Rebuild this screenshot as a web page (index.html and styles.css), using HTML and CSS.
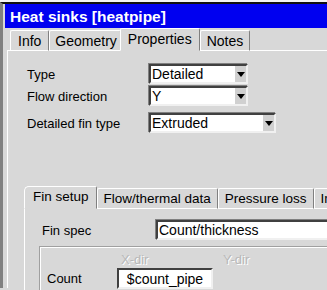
FILE: index.html
```html
<!DOCTYPE html>
<html lang="en">
<head>
  <meta charset="UTF-8">
  <title>Heat sinks [heatpipe]</title>
  <link rel="stylesheet" href="styles.css">
</head>
<body>
  <div class="window">
    <div class="titlebar">Heat sinks [heatpipe]</div>
    <div class="client">
      <div class="tabs">
        <div class="tab first">Info</div>
        <div class="tab narrow">Geometry</div>
        <div class="tab active">Properties</div>
        <div class="tab">Notes</div>
      </div>
      <div class="panel">
        <div class="row">
          <span class="label">Type</span>
          <div class="combo w100"><span>Detailed</span><i class="arrow"></i></div>
        </div>
        <div class="row">
          <span class="label">Flow direction</span>
          <div class="combo w100"><span>Y</span><i class="arrow"></i></div>
        </div>
        <div class="row gap">
          <span class="label">Detailed fin type</span>
          <div class="combo w128"><span>Extruded</span><i class="arrow"></i></div>
        </div>

        <div class="subtabs">
          <div class="tab active sub">Fin setup</div>
          <div class="tab sub">Flow/thermal data</div>
          <div class="tab sub">Pressure loss</div>
          <div class="tab sub">In</div>
        </div>
        <div class="subpanel">
          <div class="row spec">
            <span class="label">Fin spec</span>
            <div class="combo wide"><span>Count/thickness</span><i class="arrow"></i></div>
          </div>
          <div class="group">
            <div class="heads">
              <span class="xdir">X-dir</span>
              <span class="ydir">Y-dir</span>
            </div>
            <div class="row">
              <span class="label count">Count</span>
              <div class="field">$count_pipe</div>
            </div>
          </div>
        </div>
      </div>
    </div>
  </div>
</body>
</html>
```

FILE: styles.css
```css
html, body {
  margin: 0;
  width: 327px;
  height: 290px;
  overflow: hidden;
  background: #d8d8d8;
  font-family: Arial, "Liberation Sans", sans-serif;
  font-size: 13px;
  color: #000;
}
.window {
  height: 288px;
  overflow: hidden;
  border-top: 2px solid #f4f4f4;
}
.titlebar {
  border-top: 2px solid #101010;
  border-left: 3px solid #808080;
  background: #0000f0;
  color: #fff;
  font-weight: bold;
  font-size: 15.5px;
  height: 24px;
  line-height: 25px;
  padding-left: 7px;
  box-shadow: inset 2px 0 0 #d8d8d8;
  white-space: nowrap;
}
.client {
  border-left: 3px solid #808080;
  padding-left: 4px;
  height: 260px;
}
.tabs {
  display: flex;
  align-items: flex-end;
  height: 22px;
  padding-left: 3px;
  border-bottom: 1px solid #fff;
  font-size: 14px;
  white-space: nowrap;
}
.tab {
  height: 19px;
  line-height: 20px;
  padding: 0 6px;
  border-top: 1px solid #fff;
  border-left: 1px solid #fff;
  border-right: 1px solid #808080;
  border-top-left-radius: 2px;
  border-top-right-radius: 2px;
  margin-bottom: -1px;
  border-bottom: 1px solid #fff;
}
.tab.first {
  padding: 0 7px;
}
.tab.narrow {
  padding: 0 3px 0 5px;
}
.tab.active {
  height: 21px;
  padding: 0 7px 0 7px;
  border-bottom-color: #d8d8d8;
  margin-left: -1px;
}
.panel {
  border-left: 1px solid #fff;
  padding: 12px 0 0 19px;
  height: 225px;
}
.row {
  display: flex;
  align-items: center;
  height: 22px;
  white-space: nowrap;
}
.row.gap {
  margin-top: 5px;
}
.label {
  width: 122px;
  flex: none;
}
.combo {
  display: flex;
  align-items: center;
  flex: none;
  height: 16px;
  background: #fff;
  border: 2px solid;
  border-color: #404040 #f0f0f0 #f0f0f0 #404040;
  box-shadow: -1px -1px 0 #808080;
}
.combo span {
  flex: 1;
  padding-left: 1px;
  font-size: 14px;
}
.w100 { width: 95px; }
.w128 { width: 123px; }
.arrow {
  width: 11px;
  height: 16px;
  background: #d0d0d0;
  position: relative;
}
.arrow::after {
  content: "";
  position: absolute;
  left: 2px;
  top: 6px;
  border-left: 4px solid transparent;
  border-right: 4px solid transparent;
  border-top: 5px solid #000;
}
.subtabs {
  display: flex;
  align-items: flex-end;
  height: 22px;
  margin: 52px 0 0 -3px;
  border-bottom: 1px solid #fff;
  white-space: nowrap;
  font-size: 13.5px;
}
.tab.sub {
  padding: 0 6px 0 6px;
}
.tab.sub.active {
  padding: 0 7px 0 8px;
  border-top-left-radius: 5px;
  margin-left: 0;
}
.subpanel {
  margin-left: -3px;
  border-left: 1px solid #fff;
  padding: 10px 0 0 17px;
  height: 120px;
}
.row.spec .label {
  width: 114px;
}
.combo.wide {
  width: 200px;
}
.group {
  margin-top: 6px;
  margin-left: -2px;
  border: 1px solid #fff;
  box-shadow: -1px -1px 0 #a0a0a0;
  padding: 4px 0 0 6px;
  height: 60px;
  width: 300px;
}
.heads {
  position: relative;
  height: 15px;
  color: #b8b8b8;
  text-shadow: 1px 1px 0 #fff;
}
.xdir {
  position: absolute;
  left: 74px;
}
.ydir {
  position: absolute;
  left: 176px;
}
.label.count {
  width: 70px;
}
.field {
  width: 92px;
  height: 17px;
  line-height: 18px;
  text-align: center;
  background: #fff;
  border: 2px solid;
  border-color: #404040 #f0f0f0 #f0f0f0 #404040;
  font-size: 14px;
}
```
